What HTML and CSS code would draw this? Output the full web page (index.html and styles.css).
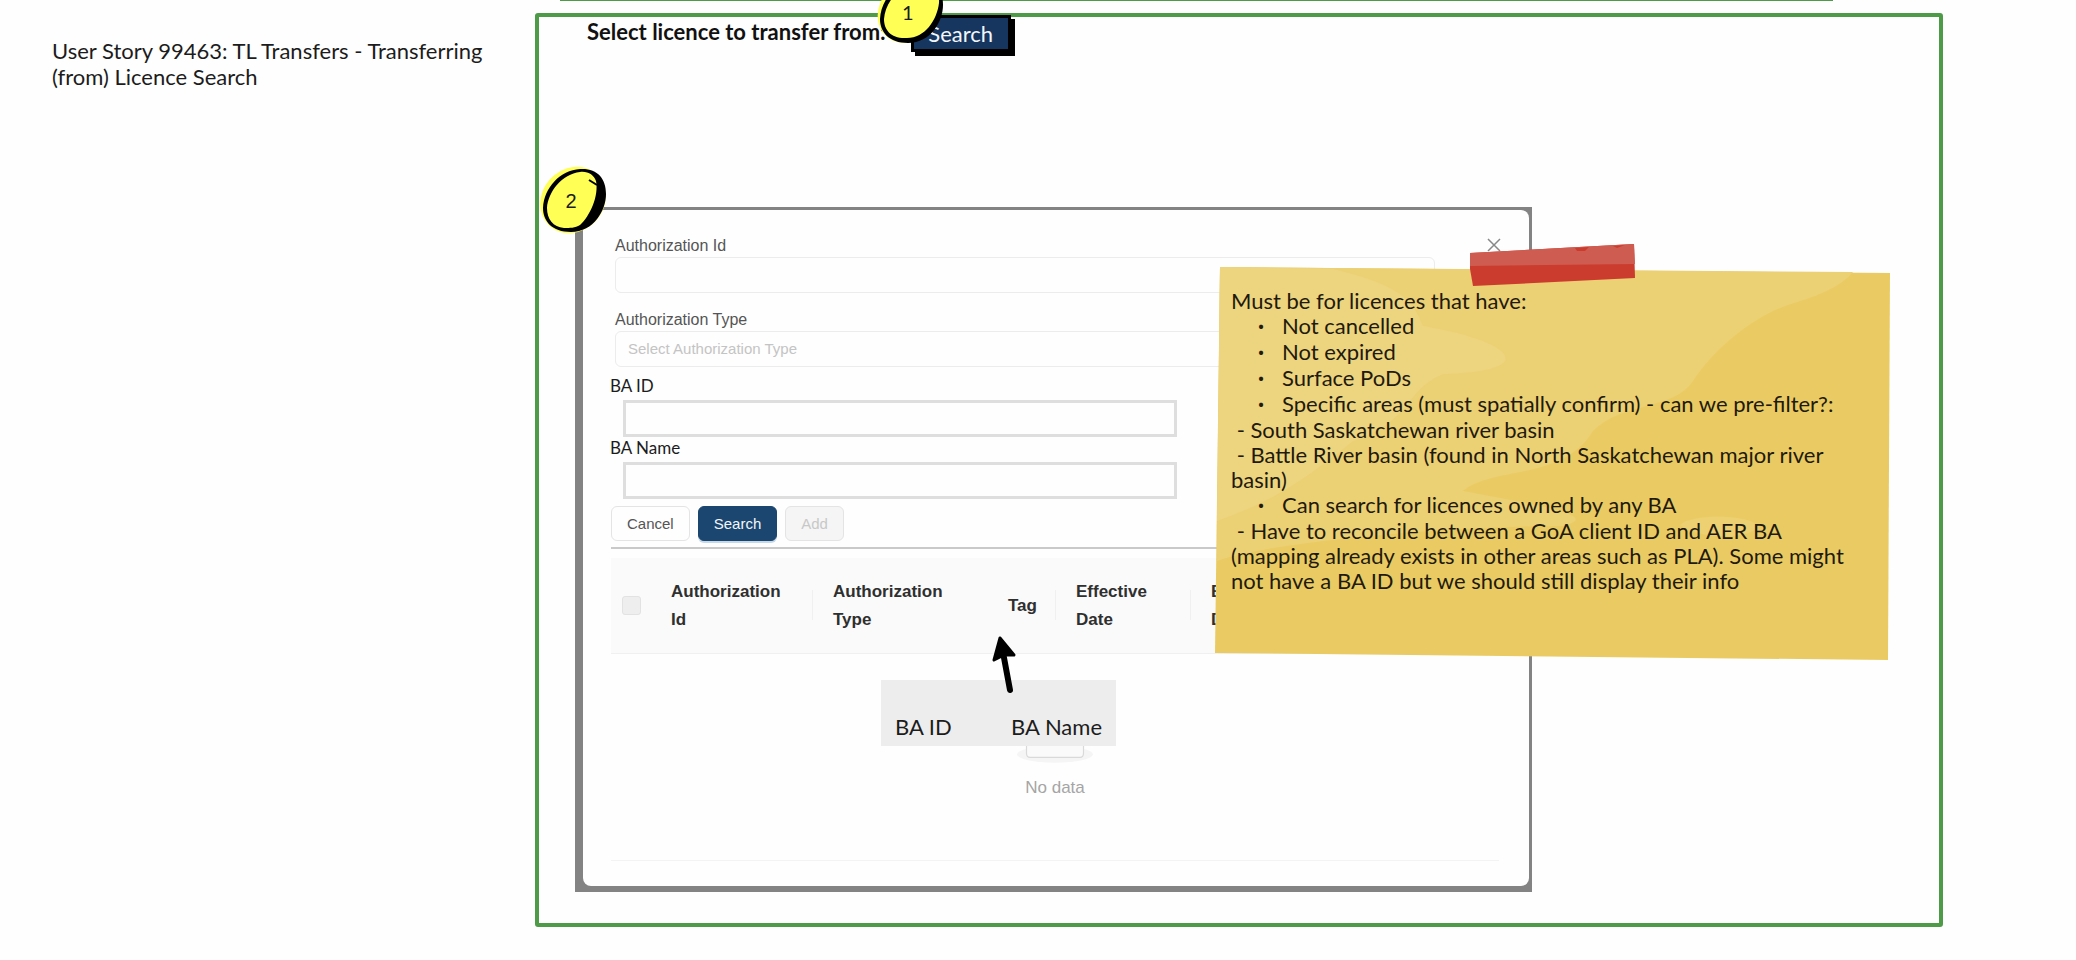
FILE: index.html
```html
<!DOCTYPE html>
<html lang="en">
<head>
  <meta charset="UTF-8" />
  <title>TL Transfers - Licence Search</title>
  <meta name="viewport" content="width=device-width, initial-scale=1.0" />
  <link rel="stylesheet" href="styles.css">
</head>
<body>

<div class="previous-frame"></div>

<div class="board">
  <aside class="story">
    <p>User Story 99463: TL Transfers - Transferring<br>(from) Licence Search</p>
  </aside>

  <main class="frame">
    <div class="picker">
      <span class="picker-label">Select licence to transfer from:</span>
      <div class="picker-action">
        <button type="button" class="sketch-btn">Search</button>
        <div class="badge badge-one">
          <svg viewBox="0 0 70 70">
            <ellipse cx="32" cy="34" rx="34" ry="29" transform="rotate(-48 32 34)" fill="#ffff55"/>
            <path d="M40 3 C57 2 66 12 66 28 C66 44 54 66 31 66 C12 66 3 55 3 42 C4 22 20 4 40 3Z"/>
            <path d="M40 6 C54 5 63 14 62 26 C60 43 48 61 30 61 C14 62 7 53 7 42 C8 26 22 8 40 6Z" fill="#ffff55"/>
          </svg>
          <span>1</span>
        </div>
      </div>
    </div>

    <section class="modal">
      <div class="badge badge-two">
        <svg viewBox="0 0 70 70">
          <ellipse cx="33" cy="34" rx="35" ry="31" transform="rotate(-48 33 34)" fill="#ffff55"/>
          <path d="M40 3 C57 2 66 12 66 28 C66 44 54 66 31 66 C12 66 3 55 3 42 C4 22 20 4 40 3Z"/>
          <path d="M40 6 C48 5 54 9 56 15 C59 30 50 50 40 59 C35 62 30 62 24 62 C13 61 7 53 7 42 C8 26 22 8 40 6Z" fill="#ffff55"/>
          <path d="M49 14 L57 19" stroke="#000" stroke-width="2"/>
        </svg>
        <span>2</span>
      </div>

      <button type="button" class="close" aria-label="Close">
        <svg viewBox="0 0 14 14"><path d="M1 1 L13 13 M13 1 L1 13" stroke="#888" stroke-width="1.5"/></svg>
      </button>

      <form class="filters">
        <div class="field">
          <label for="auth-id">Authorization Id</label>
          <input type="text" id="auth-id">
        </div>
        <div class="field">
          <label for="auth-type">Authorization Type</label>
          <select id="auth-type">
            <option>Select Authorization Type</option>
          </select>
        </div>
        <div class="sketch-field">
          <label for="ba-id">BA ID</label>
          <input type="text" id="ba-id">
        </div>
        <div class="sketch-field">
          <label for="ba-name">BA Name</label>
          <input type="text" id="ba-name">
        </div>
        <div class="actions">
          <button type="button" class="btn">Cancel</button>
          <button type="button" class="btn btn-primary">Search</button>
          <button type="button" class="btn" disabled>Add</button>
        </div>
      </form>

      <table class="results">
        <thead>
          <tr>
            <th class="col-check"><input type="checkbox" aria-label="Select all" disabled></th>
            <th class="col-id divided">Authorization<br>Id</th>
            <th class="col-type">Authorization<br>Type</th>
            <th class="col-tag divided">Tag</th>
            <th class="col-date divided">Effective<br>Date</th>
            <th>E<br>D</th>
          </tr>
        </thead>
        <tbody>
          <tr>
            <td colspan="6" class="empty">
              <svg viewBox="0 0 64 41">
                <ellipse cx="32" cy="33" rx="32" ry="7" fill="#f5f5f5"/>
                <path d="M55 12.8 L44.9 1.3 C44.3 .5 43.5 0 42.7 0 H21.3 C20.5 0 19.7 .5 19.1 1.3 L9 12.8 V22 H55Z" fill="#fff" stroke="#d9d9d9"/>
                <path d="M8 16 V32 C8 34 9 35.500 11 35.500 H53 C55 35.500 56 34 56 32 V16Z" fill="#fafafa" stroke="#d9d9d9"/>
              </svg>
              <p>No data</p>
            </td>
          </tr>
        </tbody>
      </table>

      <div class="extra-columns">
        <span>BA ID</span>
        <span>BA Name</span>
        <svg class="arrow" viewBox="0 0 30 60">
          <path d="M20 55 L12 12" stroke="#000" stroke-width="6" stroke-linecap="round"/>
          <path d="M10 3 L24 20 L14 20 L4 25Z" stroke="#000" stroke-width="3" stroke-linejoin="round"/>
        </svg>
      </div>
    </section>

    <div class="note">
      <svg class="note-paper" viewBox="0 0 680 420" preserveAspectRatio="none">
        <path d="M7 26 L677 32 L675 419 L2 412Z" fill="#eacb63"/>
        <path d="M7 26 L640 31 C620 55 580 60 560 70 C530 85 500 110 480 140 C460 170 410 160 380 190 C350 240 280 225 250 250 C330 265 390 275 350 285 C240 285 60 300 4 320Z" fill="#ecd074"/>
        <path d="M7 26 L120 28 C190 45 200 60 210 85 C300 100 330 130 230 133 C190 150 200 180 140 200 C90 240 60 260 4 280Z" fill="#edd47f"/>
        <path d="M467 284 C480 270 560 275 540 290 C520 300 480 295 467 284Z" fill="#edd071"/>
        <path d="M257 12 L421 3 L422 37 L260 45 L257 28Z" fill="#cb3c2e"/>
        <path d="M257 12 L421 3 L422 23 L257 25Z" fill="#cf5c50"/>
        <path d="M362 7 L376 6 L372 10 L364 10Z M400 5 L412 4 L404 7Z" fill="#cb3c2e"/>
      </svg>
      <div class="note-text">
        <p>Must be for licences that have:</p>
        <ul>
          <li>Not cancelled</li>
          <li>Not expired</li>
          <li>Surface PoDs</li>
          <li>Specific areas (must spatially confirm) - can we pre-filter?:</li>
        </ul>
        <p>&nbsp;- South Saskatchewan river basin</p>
        <p>&nbsp;- Battle River basin (found in North Saskatchewan major river<br>basin)</p>
        <ul>
          <li>Can search for licences owned by any BA</li>
        </ul>
        <p>&nbsp;- Have to reconcile between a GoA client ID and AER BA<br>(mapping already exists in other areas such as PLA). Some might<br>not have a BA ID but we should still display their info</p>
      </div>
    </div>
  </main>
</div>

</body>
</html>
```
FILE: styles.css
```css
* {
  box-sizing: border-box;
  margin: 0;
  padding: 0;
}

body {
  font-family: Lato, sans-serif;
  font-size: 22px;
  line-height: 26px;
  color: #1c1c1c;
  background: #fefefe;
}

button, input, select {
  font: inherit;
}

/* Bottom edge of the frame above */
.previous-frame {
  height: 1px;
  margin: 0 243px 12px 560px;
  background: #4d9b47;
}

.board {
  display: flex;
}

.story {
  flex: none;
  width: 535px;
  padding: 25px 0 0 52px;
  white-space: nowrap;
}

.frame {
  position: relative;
  flex: 1;
  margin-right: 133px;
  padding: 0 36px 31px;
  border: 4px solid #4d9b47;
  border-radius: 3px;
}

/* Licence picker */
.picker {
  display: flex;
  gap: 25px;
  height: 190px;
  padding-left: 12px;
}

.picker-label {
  padding-top: 2px;
  font-weight: bold;
  color: #111;
  white-space: nowrap;
}

.picker-action {
  position: relative;
  margin-top: -2px;
}

.sketch-btn {
  width: 100px;
  height: 37px;
  border: 3px solid #000;
  background: #17365f;
  box-shadow: 4px 4px 0 #000;
  color: #f2f6fa;
}

/* Numbered markers */
.badge {
  position: absolute;
  z-index: 2;
  width: 70px;
  height: 70px;
}

.badge svg {
  display: block;
  overflow: visible;
}

.badge span {
  position: absolute;
  top: 22px;
  left: 0;
  width: 62px;
  font-size: 20px;
  text-align: center;
}

.badge-one {
  top: -38px;
  left: -34px;
}

.badge-two {
  top: -44px;
  left: -43px;
}

/* Search dialog */
.modal {
  position: relative;
  max-width: 957px;
  padding: 25px 30px 25px 28px;
  border: solid #838383;
  border-width: 3px 3px 6px 8px;
  background: #838383;
  font-family: "Liberation Sans", Arial, sans-serif;
  font-size: 16px;
  z-index: 0;
}

.modal::before {
  content: "";
  position: absolute;
  inset: 0;
  z-index: -1;
  border-radius: 8px;
  background: #fefefe;
}

.close {
  position: absolute;
  top: 28px;
  right: 28px;
  width: 14px;
  height: 14px;
  border: none;
  background: none;
}

.close svg {
  display: block;
}

.field {
  margin: 0 64px 16px 4px;
}

.field label,
.sketch-field label {
  display: block;
  line-height: 22px;
  color: #555;
}

.field input,
.field select {
  display: block;
  width: 100%;
  height: 36px;
  padding: 0 12px;
  border: 1px solid #ececec;
  border-radius: 6px;
  background: #fefefe;
  font-size: 15px;
  color: #c4c4c4;
  appearance: none;
}

.field + .sketch-field {
  margin-top: -8px;
}

.sketch-field label {
  margin: 0 0 3px -1px;
  font-family: Lato, sans-serif;
  font-size: 17px;
  color: #1c1c1c;
}

.sketch-field input {
  display: block;
  width: 100%;
  max-width: 554px;
  height: 37px;
  margin-left: 12px;
  padding: 0 10px;
  border: 3px solid #dedede;
  background: #fefefe;
}

.actions {
  display: flex;
  gap: 8px;
  padding: 7px 0 6px;
  border-bottom: 2px solid #c9c9c9;
}

.btn {
  height: 35px;
  padding: 0 15px;
  border: 1px solid #e4e4e4;
  border-radius: 6px;
  background: #fefefe;
  font-size: 15px;
  color: #555;
}

.btn-primary {
  border-color: #1b466f;
  background: #1b466f;
  box-shadow: 0 2px 0 #c7d8e6;
  color: #f2f6fa;
}

.btn:disabled {
  background: #f5f5f5;
  color: #c8c8c8;
}

/* Results */
.results {
  width: 100%;
  margin-top: 9px;
  border-collapse: collapse;
  table-layout: fixed;
}

.results th {
  position: relative;
  height: 95px;
  padding: 2px 0 0 20px;
  border-bottom: 1px solid #f0f0f0;
  background: #fafafa;
  font-size: 17px;
  line-height: 28px;
  text-align: left;
  color: #2f2f2f;
}

.divided::after {
  content: "";
  position: absolute;
  top: 32px;
  right: 0;
  width: 1px;
  height: 30px;
  background: #f0f0f0;
}

.results .col-check {
  width: 40px;
  padding: 0 0 0 11px;
}

.col-id {
  width: 162px;
}

.col-type {
  width: 175px;
}

.col-tag {
  width: 68px;
}

.col-date {
  width: 135px;
}

.col-check input {
  display: block;
  width: 19px;
  height: 19px;
  border: 1px solid #e2e2e2;
  border-radius: 3px;
  background: #eee;
  appearance: none;
}

.empty {
  padding: 61px 0 59px;
  border-bottom: 1px solid #f3f3f3;
  font-size: 17px;
  text-align: center;
  color: #a5a5a5;
}

.empty svg {
  display: block;
  width: 76px;
  height: 49px;
  margin: 0 auto 11px;
}

/* Columns to be added to the table */
.extra-columns {
  position: absolute;
  top: 470px;
  left: 298px;
  display: flex;
  justify-content: space-between;
  width: 235px;
  height: 66px;
  padding: 34px 14px 0;
  background: #ededed;
  font-family: Lato, sans-serif;
  font-size: 22px;
  color: #1c1c1c;
}

.arrow {
  position: absolute;
  top: -45px;
  left: 109px;
  width: 30px;
  height: 60px;
}

/* Sticky note */
.note {
  position: absolute;
  z-index: 3;
  top: 224px;
  left: 674px;
  width: 680px;
  height: 420px;
}

.note-paper {
  position: absolute;
  width: 100%;
  height: 100%;
}

.note-text {
  position: relative;
  padding: 47px 0 0 18px;
  line-height: 25px;
  color: #1f1a0c;
  white-space: nowrap;
}

.note-text ul {
  list-style: none;
}

.note-text li {
  display: flex;
  line-height: 26px;
}

.note-text li::before {
  content: "·";
  width: 24px;
  padding-left: 27px;
  font-weight: bold;
}
```
